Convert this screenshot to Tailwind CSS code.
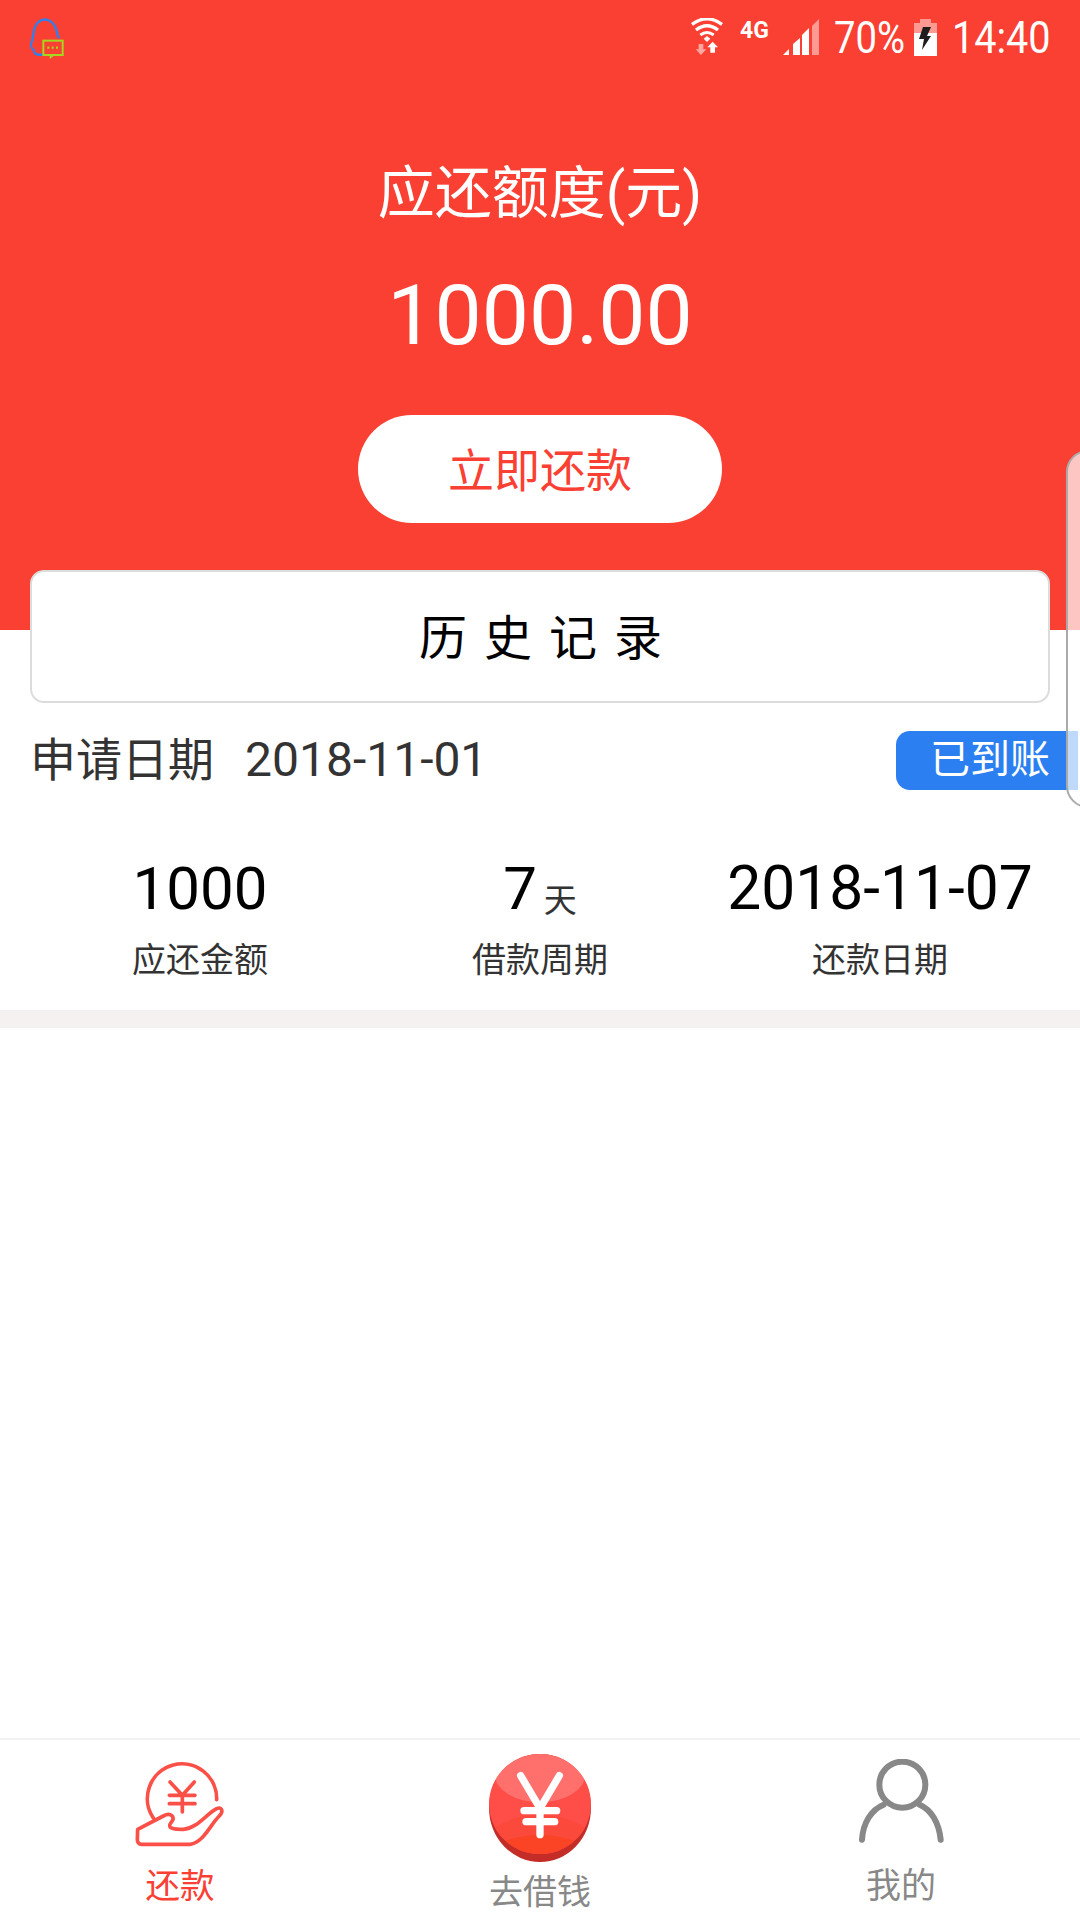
<!DOCTYPE html>
<html lang="zh"><head><meta charset="utf-8"><script src="https://cdn.jsdelivr.net/npm/@tailwindcss/browser@4"></script></head>
<body class="m-0">
<div class="relative w-[1080px] h-[1920px] overflow-hidden bg-white flex flex-col font-['Roboto','Noto_Sans_CJK_SC',sans-serif]">
  <!-- red header -->
  <header class="h-[630px] shrink-0 bg-[#f94033] flex flex-col items-center text-white">
    <div class="w-full h-[78px] flex items-start justify-between pl-[27px] pr-[28px] pt-[17px]">
      <svg class="w-[40px] h-[42px]" viewBox="80 48 120 126" fill="none"><path d="M103 150 C90 140 88 132 96 118 C100 95 100 72 118 60 C135 50 155 58 165 78 C170 92 170 100 176 112" stroke="#2f80ed" stroke-width="7"/><path d="M100 152 C108 164 118 162 128 160" stroke="#2f80ed" stroke-width="7"/><rect x="129" y="119" width="58" height="43" stroke="#a6d61f" stroke-width="6"/><path d="M150 162 v8 l8 -6" stroke="#a6d61f" stroke-width="4"/><path d="M141 140h6M154 140h6M167 140h6" stroke="#a6d61f" stroke-width="7"/></svg>
      <div class="flex items-start h-[40px]">
        <svg class="w-[33px] h-[38px] mt-[1px]" viewBox="65 54 99 114" fill="none"><path d="M68 73 Q113 40 158 73" stroke="#fff" stroke-width="10"/><path d="M80 90 Q113 65 146 90" stroke="#fff" stroke-width="10"/><path d="M93 105 Q113 90 133 105" stroke="#fff" stroke-width="9"/><path d="M103 116 L113 108 L123 116 L113 126Z" fill="#fff"/><path d="M88 132 h14 v16 h9 l-16 17 l-16 -17 h9z" fill="#ffa6a0"/><path d="M123 158 h14 v-16 h9 l-16 -17 l-16 17 h9z" fill="#fff"/></svg>
        <span class="ml-[16px] w-[29px] -mt-[1px] text-[23px] leading-[30px] font-bold">4G</span>
        <svg class="ml-[14px] w-[36px] h-[37px] mt-[2px]" viewBox="0 0 36 37"><path d="M0 36 L6 30 V36Z" fill="#fff"/><path d="M10 25 L17 19 V36 H10Z" fill="#fff"/><path d="M19 16 L26 9 V36 H19Z" fill="#fff"/><path d="M29 7 L36 0 V36 H29Z" fill="#ff9a93"/></svg>
        <span class="ml-[15px] w-[71px] mt-[1px] text-[45px] leading-[40px] scale-x-[.85] origin-left whitespace-nowrap">70%</span>
        <svg class="ml-[9px] w-[23px] h-[37px] mt-[2px]" viewBox="0 0 23 37"><path d="M6 0h11v4h6v10H0V4h6z" fill="#ff9a93"/><rect y="14" width="23" height="23" fill="#fff"/><path d="M9 8 H17 L13 17 H17 L8 31 L10 20 H5 Z" fill="#1d1d1d"/></svg>
        <span class="ml-[15px] w-[100px] mt-[1px] text-[45px] leading-[40px] scale-x-[.88] origin-left whitespace-nowrap">14:40</span>
      </div>
    </div>
    <h1 class="mt-[83px] text-[57px] leading-[66px] font-normal">应还额度(元)</h1>
    <p class="mt-[44px] text-[84px] leading-[90px]">1000.00</p>
    <button class="mt-[54px] w-[364px] h-[108px] pt-[4px] rounded-full bg-white text-[#f94033] text-[46px]">立即还款</button>
  </header>
  <!-- history -->
  <div class="relative mx-[30px] -mt-[60px] h-[133px] shrink-0 rounded-[14px] border-2 border-[#dcdcdc] bg-white flex items-center justify-center pl-[18px] pt-[4px] text-black text-[48px] tracking-[17px]">历史记录</div>
  <div class="mt-[27px] h-[60px] shrink-0 flex items-center justify-between pl-[30px] pr-[2px] text-[#333]">
    <div class="flex items-center"><span class="text-[46px]">申请日期</span><span class="ml-[31px] text-[48px]">2018-11-01</span></div>
    <div class="w-[182px] h-[59px] rounded-l-[14px] bg-[#2b7ff0] text-white text-[40px] flex items-center justify-end pr-[28px]">已到账</div>
  </div>
  <!-- stats -->
  <div class="mt-[63px] h-[130px] shrink-0 px-[30px] grid grid-cols-3 text-center text-black">
    <div class="flex flex-col items-center"><div class="h-[72px] text-[60px] leading-[72px]">1000</div><div class="mt-[13px] text-[34px] leading-[44px] text-[#333]">应还金额</div></div>
    <div class="flex flex-col items-center"><div class="h-[72px] text-[60px] leading-[72px]">7<span class="ml-[7px] text-[33px] relative top-[3px] text-[#333]">天</span></div><div class="mt-[13px] text-[34px] leading-[44px] text-[#333]">借款周期</div></div>
    <div class="flex flex-col items-center"><div class="h-[72px] text-[60.5px] leading-[72px] whitespace-nowrap">2018-11-07</div><div class="mt-[13px] text-[34px] leading-[44px] text-[#333]">还款日期</div></div>
  </div>
  <div class="mt-[27px] h-[18px] shrink-0 bg-[#f6f1f1]"></div>
  <div class="flex-1"></div>
  <!-- tab bar -->
  <nav class="h-[182px] shrink-0 border-t-2 border-[#f2f2f2] grid grid-cols-3">
    <div class="flex flex-col items-center pt-[22px] text-[#f94033]">
      <svg class="w-[90px] h-[85px]" viewBox="105 90 270 255" fill="none" stroke="#fb5047" stroke-width="11" stroke-linecap="round" stroke-linejoin="round"><path d="M350 203 A104 104 0 1 0 160 258"/><path d="M113 292 L190 252 C212 240 228 255 213 272 C198 290 225 292 250 292 C290 290 320 245 350 230 C367 222 372 240 355 255 C330 280 310 332 270 337 L125 337 Q112 337 112 322 Z"/><path d="M210 150 L247 190 L283 150M208 190H285M208 215H285M247 190V240"/></svg>
      <span class="mt-[17px] text-[34.5px] leading-[44px]">还款</span>
    </div>
    <div class="flex flex-col items-center pt-[14px] text-[#888]">
      <svg class="w-[102px] h-[108px]" viewBox="117 72 306 324"><defs><clipPath id="c"><ellipse cx="270" cy="222" rx="153" ry="150"/></clipPath></defs><ellipse cx="270" cy="234" rx="153" ry="162" fill="#c42c28"/><ellipse cx="270" cy="222" rx="153" ry="150" fill="#ff4d47"/><g clip-path="url(#c)"><ellipse cx="270" cy="135" rx="135" ry="82" fill="#ff6f6b"/><ellipse cx="270" cy="385" rx="190" ry="130" fill="#fb4a3c"/><ellipse cx="270" cy="400" rx="170" ry="85" fill="#fb4325"/></g><path d="M212 137 L270 235 L328 137M222 242H320M228 275H314M270 235V314" fill="none" stroke="#fff" stroke-width="22" stroke-linecap="round"/></svg>
      <span class="mt-[8px] text-[34px] leading-[44px]">去借钱</span>
    </div>
    <div class="flex flex-col items-center pt-[19px] pl-[2px] text-[#888]">
      <svg class="w-[85px] h-[85px]" viewBox="118 88 255 255" fill="none" stroke="#888" stroke-width="18" stroke-linecap="round"><circle cx="248" cy="165" r="69"/><path d="M127 330 C130 280 155 240 192 225M300 225 C335 240 358 280 363 330"/></svg>
      <span class="mt-[21px] text-[35px] leading-[44px]">我的</span>
    </div>
  </nav>
  <!-- floating side panel overlay -->
  <div class="absolute left-[1066px] top-[450px] w-[40px] h-[358px] rounded-l-[22px] border-2 border-[#aaaaaa] bg-white/70"></div>
</div>
</body></html>
